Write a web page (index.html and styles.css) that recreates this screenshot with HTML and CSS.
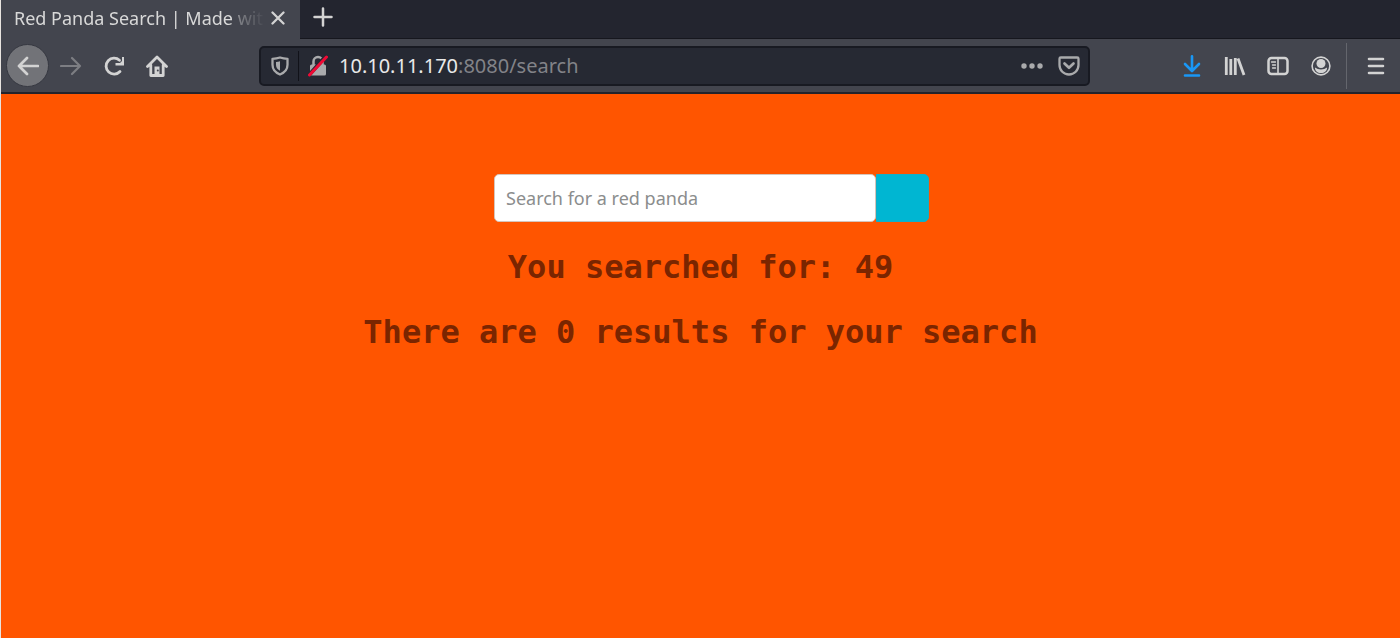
FILE: index.html
```html
<!DOCTYPE html>
<html lang="en">
<head>
  <meta charset="UTF-8">
  <meta name="viewport" content="width=device-width, initial-scale=1.0">
  <title>Red Panda Search | Made with Spring Boot</title>
  <link rel="stylesheet" href="styles.css">
</head>
<body>
  <header class="browser">
    <div class="tabs">
      <div class="tab">
        <span class="tab-title">Red Panda Search | Made wit</span>
        <button class="tab-close" type="button" aria-label="Close tab">
          <svg width="14" height="14" viewBox="0 0 14 14"><path d="M1.500 1.500l11 11M12.500 1.500l-11 11" stroke-width="2.300"/></svg>
        </button>
      </div>
      <button class="new-tab" type="button" aria-label="New tab">
        <svg width="20" height="20" viewBox="0 0 20 20"><path d="M10 1.500v17M1.500 10h17" stroke-width="2.500"/></svg>
      </button>
    </div>

    <nav class="toolbar">
      <button class="tool back" type="button" aria-label="Back">
        <svg width="22" height="22" viewBox="0 0 22 22"><path d="M21 11H2M10 3l-8 8 8 8" stroke-width="2.700"/></svg>
      </button>
      <button class="tool forward" type="button" aria-label="Forward" disabled>
        <svg width="22" height="22" viewBox="0 0 22 22"><path d="M1 11h19M12 3l8 8-8 8" stroke-width="2.200"/></svg>
      </button>
      <button class="tool" type="button" aria-label="Reload">
        <svg width="22" height="22" viewBox="0 0 22 22"><path d="M17 16.500A8 8 0 1 1 16.500 5.200" stroke-width="2.800"/><path class="solid" d="M21 2v8.500h-8.500V8H17l2-2V2z"/></svg>
      </button>
      <button class="tool" type="button" aria-label="Home">
        <svg width="22" height="22" viewBox="0 0 22 22"><path d="M1.500 11.500L11 2l9.500 9.500M4.800 10v10.500h12.400V10" stroke-width="2.800"/><path class="solid" d="M8.500 19.500v-8h5v8z"/><circle class="knob" cx="11.800" cy="15.500" r="1"/></svg>
      </button>

      <div class="urlbar">
        <svg class="shield" width="18" height="20" viewBox="0 0 18 20"><path d="M9 1.500c2.500.8 5 1.200 7.500 1.300v6c0 5-2.500 7.700-7.500 9.700-5-2-7.500-4.700-7.500-9.700v-6C4 2.700 6.500 2.300 9 1.500z" stroke-width="2.300"/><path class="solid" d="M9 5.200v9.600C6.200 13.300 5 11.500 5 8.800V6c1.500-.1 2.800-.4 4-.8z"/></svg>
        <span class="divider"></span>
        <svg class="lock" width="20" height="22" viewBox="0 0 20 22"><path d="M5.500 10V6.500a4.500 4.500 0 0 1 9 0V10" stroke-width="2.500"/><rect class="solid" x="2" y="9.500" width="16" height="11" rx="1.500"/><path class="gap" d="M1.500 19.500L17.500 1.500" stroke-width="4"/><path class="slash" d="M1.500 20L18.500 2" stroke-width="3"/></svg>
        <span class="address"><b>10.10.11.170</b>:8080/search</span>
        <svg class="dots" width="22" height="6" viewBox="0 0 22 6"><circle class="solid" cx="3" cy="3" r="2.700"/><circle class="solid" cx="11" cy="3" r="2.700"/><circle class="solid" cx="19" cy="3" r="2.700"/></svg>
        <svg class="pocket" width="22" height="20" viewBox="0 0 22 20"><path d="M2.800 1.500h16.400q1.300 0 1.300 1.300v6.200a9.500 9.500 0 0 1-19 0V2.800q0-1.300 1.300-1.300z" stroke-width="2.300"/><path d="M6.500 7.500l4.500 4.300 4.500-4.300" stroke-width="2.700"/></svg>
      </div>

      <button class="tool download" type="button" aria-label="Downloads">
        <svg width="18" height="22" viewBox="0 0 18 22"><path d="M9 1.300v14.500M2 9l7 7 7-7M2 20.500h14" stroke-width="2.600"/></svg>
      </button>
      <button class="tool" type="button" aria-label="Library">
        <svg width="22" height="20" viewBox="0 0 22 20"><path class="books" d="M2.300 1v18M6.800 3v16M11.300 2v17M14 2.500L20 19" stroke-width="2.800"/></svg>
      </button>
      <button class="tool" type="button" aria-label="Sidebars">
        <svg width="22" height="20" viewBox="0 0 22 20"><rect x="1.500" y="2" width="19" height="16" rx="3" stroke-width="2.500"/><path d="M11 2v16" stroke-width="1.600"/><path d="M4.500 6h4M5.500 9h3M5.500 12h3" stroke-width="1.300"/></svg>
      </button>
      <button class="tool" type="button" aria-label="Account">
        <svg width="20" height="20" viewBox="0 0 20 20"><circle cx="10" cy="10" r="8.900" stroke-width="1.600"/><circle class="solid" cx="10" cy="7.500" r="4.500"/><path class="solid" d="M4 11.500q2.500 2 6 2t6-2c.3 3.500-2.500 5.500-6 5.500s-6.300-2-6-5.500z"/></svg>
      </button>
      <span class="separator"></span>
      <button class="tool" type="button" aria-label="Menu">
        <svg width="18" height="18" viewBox="0 0 18 18"><path d="M2 2h14M2 9h14M2 16h14" stroke-width="2.600"/></svg>
      </button>
    </nav>
  </header>

  <main class="page">
    <form class="search" action="/search" method="post">
      <input class="search-term" type="text" name="name" placeholder="Search for a red panda" aria-label="Search for a red panda">
      <button class="search-button" type="submit" aria-label="Search"></button>
    </form>
    <h2>You searched for: 49</h2>
    <h2>There are 0 results for your search</h2>
  </main>
</body>
</html>
```
FILE: styles.css
```css
* {
  box-sizing: border-box;
}
body {
  display: flex;
  flex-direction: column;
  min-height: 100vh;
  margin: 0;
  border-left: 1px solid #e8e4e0;
  background-color: #ff5500;
  font-family: "Noto Sans", sans-serif;
}
button {
  margin: 0;
  padding: 0;
  border: none;
  background: none;
  color: #d3d3d3;
}
svg {
  display: block;
  flex: none;
  fill: none;
  stroke: currentColor;
  stroke-linecap: round;
  stroke-linejoin: round;
}
.solid {
  fill: currentColor;
  stroke: none;
}
.books {
  stroke-linecap: butt;
}

/* tab strip */
.browser {
  border-bottom: 2px solid #22232b;
  background-color: #43454e;
}
.tabs {
  display: flex;
  height: 39px;
  background-color: #23252f;
}
.tab {
  display: flex;
  align-items: center;
  width: 299px;
  padding: 0 10px 4px 13px;
  background-color: #43454e;
  color: #d8d8d8;
}
.tab-title {
  flex: 1;
  overflow: hidden;
  font-size: 18px;
  line-height: 24px;
  white-space: nowrap;
  -webkit-mask-image: linear-gradient(to left, transparent, rgba(0, 0, 0, 0.4) 26px, #000 34px);
  mask-image: linear-gradient(to left, transparent, rgba(0, 0, 0, 0.4) 26px, #000 34px);
}
.tab-close {
  display: flex;
  justify-content: center;
  width: 24px;
}
.new-tab {
  display: flex;
  flex: 1;
  align-items: center;
  padding: 0 0 5px 13px;
  border-bottom: 1px solid #16171e;
}

/* navigation toolbar */
.toolbar {
  display: flex;
  align-items: center;
  height: 53px;
  padding: 0 3px 0 5px;
}
.tool {
  display: flex;
  flex: none;
  align-items: center;
  justify-content: center;
  width: 43px;
  height: 43px;
}
.back {
  border: 1px solid #363841;
  border-radius: 50%;
  background-color: #727378;
}
.forward {
  color: #7d7e83;
}
.download {
  color: #1a97f5;
}
.knob {
  fill: #43454e;
  stroke: none;
}
.separator {
  width: 1px;
  height: 46px;
  margin: 0 7px 0 4px;
  background-color: #64666d;
}
.urlbar {
  display: flex;
  flex: 1;
  align-items: center;
  height: 40px;
  margin: 0 80px 0 81px;
  padding: 0 8px 0 10px;
  border: 2px solid #181a22;
  border-radius: 5px;
  background-color: #262933;
  color: #a9aaac;
}
.divider {
  width: 1px;
  height: 30px;
  margin: 0 9px;
  background-color: #111219;
}
.address {
  flex: 1;
  margin-left: 11px;
  color: #828388;
  font-size: 20px;
  line-height: 26px;
}
.address b {
  color: #e9e9e9;
  font-weight: normal;
}
.gap {
  stroke: #262933;
}
.slash {
  stroke: #f00a35;
}
.pocket {
  margin-left: 15px;
}

/* page content */
.page {
  flex: 1;
  padding-top: 80px;
  text-align: center;
}
.search {
  display: flex;
  justify-content: center;
  padding-left: 22px;
}
.search-term {
  width: 382px;
  height: 48px;
  padding: 0 11px;
  border: 1px solid #d6c5bb;
  border-radius: 5px;
  background-color: #fff;
  font-family: inherit;
  font-size: 18px;
}
.search-term::placeholder {
  color: #8b8d8d;
}
.search-button {
  width: 53px;
  border: 1px solid #14aec5;
  border-radius: 0 5px 5px 0;
  background-color: #00b6d2;
}
h2 {
  margin: 26px 0 27px;
  color: #7a2500;
  font-family: "DejaVu Sans Mono", monospace;
  font-size: 32px;
  line-height: 38px;
}
```
